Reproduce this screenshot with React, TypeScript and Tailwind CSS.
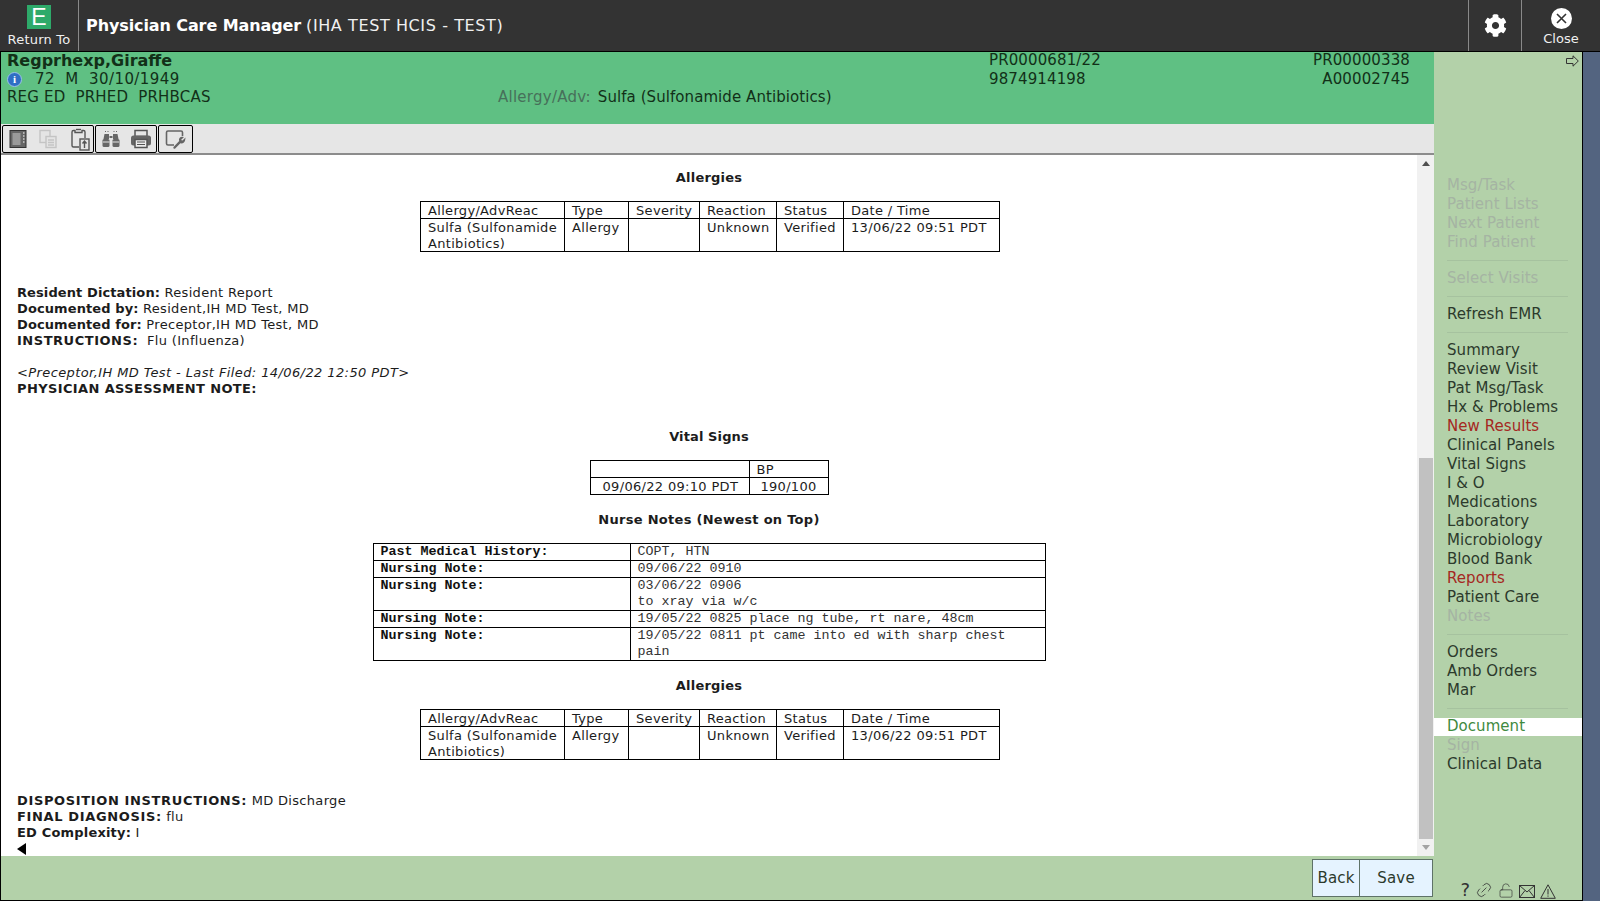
import React from "react";
import { FaCog } from "react-icons/fa";
import { Link2, LockOpen } from "lucide-react";

function Cell({ children, className = "" }: { children?: React.ReactNode; className?: string }) {
  return (
    <td className={`border border-black px-[7px] align-top leading-[16px] ${className}`}>
      <div className="translate-y-px">{children}</div>
    </td>
  );
}

const allergyRows = (
  <table className="mx-auto border-collapse border border-black w-[580px] table-fixed">
    <colgroup>
      <col className="w-[144px]" /><col className="w-[64px]" /><col className="w-[71px]" /><col className="w-[77px]" /><col className="w-[67px]" /><col />
    </colgroup>
    <tbody>
      <tr>
        {["Allergy/AdvReac", "Type", "Severity", "Reaction", "Status", "Date / Time"].map((h) => (
          <Cell key={h} className="h-[17px] whitespace-nowrap">{h}</Cell>
        ))}
      </tr>
      <tr>
        <Cell className="whitespace-nowrap">Sulfa (Sulfonamide<br />Antibiotics)</Cell>
        <Cell>Allergy</Cell>
        <Cell />
        <Cell>Unknown</Cell>
        <Cell>Verified</Cell>
        <Cell className="whitespace-nowrap">13/06/22 09:51 PDT</Cell>
      </tr>
    </tbody>
  </table>
);

function Heading({ children, className }: { children: React.ReactNode; className: string }) {
  return <div className={`text-center font-bold leading-[16px] translate-y-px ${className}`}>{children}</div>;
}

const nurse: [string, string[]][] = [
  ["Past Medical History:", ["COPT, HTN"]],
  ["Nursing Note:", ["09/06/22 0910"]],
  ["Nursing Note:", ["03/06/22 0906", "to xray via w/c"]],
  ["Nursing Note:", ["19/05/22 0825 place ng tube, rt nare, 48cm"]],
  ["Nursing Note:", ["19/05/22 0811 pt came into ed with sharp chest", "pain"]],
];

function MenuItem({ label, tone = "dark" }: { label: string; tone?: "dark" | "dim" | "red" }) {
  const c = tone === "dim" ? "text-[#a5b4a3]" : tone === "red" ? "text-[#a5281f]" : "text-[#2c3a2c]";
  return <div className={`h-[19px] leading-[19px] pl-[13px] ${c}`}>{label}</div>;
}

function Sep({ className }: { className: string }) {
  return <div className={`ml-[13px] w-[121px] h-px bg-[#a6c29f] ${className}`} />;
}

function Tool({ children }: { children: React.ReactNode }) {
  return <div className="w-[30px] h-[26px] flex items-center justify-center shrink-0">{children}</div>;
}

export default function App() {
  return (
    <div className="h-[901px] w-[1600px] flex flex-col bg-[#536480] overflow-hidden text-[13px] text-[#1c1c1c] font-['DejaVu_Sans',sans-serif] tracking-[0.32px]">
      {/* Header */}
      <header className="h-[52px] shrink-0 flex bg-[#333333] border-b border-black text-white">
        <div className="w-[79px] flex flex-col items-center border-r border-[#8a8a8a]">
          <div className="mt-[5px] w-[24px] h-[24px] bg-[#2eaa6a] flex items-center justify-center text-[23px] font-['Liberation_Sans',sans-serif] font-normal leading-none tracking-normal">E</div>
          <div className="mt-[3px] text-[13px] leading-[16px] text-[#f0f0f0] whitespace-nowrap tracking-[0.2px]">Return To</div>
        </div>
        <div className="flex-1 flex items-center pl-[7px] text-[16px]">
          <span className="font-bold tracking-[-0.1px]">Physician Care Manager</span>
          <span className="ml-[5px] text-[#f0f0f0] tracking-[0.6px]">(IHA TEST HCIS - TEST)</span>
        </div>
        <div className="w-[53px] flex items-center justify-center border-l border-[#8a8a8a]">
          <FaCog className="w-[23px] h-[23px] text-white" />
        </div>
        <div className="w-[79px] flex flex-col items-center border-l border-[#8a8a8a]">
          <div className="mt-[8px] w-[21px] h-[21px] rounded-full bg-white flex items-center justify-center">
            <svg viewBox="0 0 21 21" className="w-[21px] h-[21px]"><path d="M6 6l9 9M15 6l-9 9" stroke="#333" strokeWidth="1.6" fill="none" /></svg>
          </div>
          <div className="mt-[2px] text-[13px] leading-[16px] text-[#f0f0f0] tracking-normal">Close</div>
        </div>
      </header>

      <div className="flex-1 flex min-h-0">
        <div className="w-[1583px] flex border-r border-b border-black">
          {/* Left column */}
          <div className="w-[1434px] flex flex-col border-l border-black">
            {/* Banner */}
            <div className="h-[72px] bg-[#5fc083] grid grid-cols-[497px_491px_1fr] text-[15px] leading-[18px] text-[#123018] tracking-[0.12px]">
              <div className="pl-[6px]">
                <div className="font-bold text-[16px] leading-[17px] tracking-normal">Regprhexp,Giraffe</div>
                <div className="flex items-center h-[18px] mt-[1px] whitespace-pre tracking-[0.42px]">
                  <span className="w-[15px] h-[15px] rounded-full bg-[#2f6fc4] border border-[#9cc0ea] text-white text-[11px] leading-[13px] text-center font-bold font-['Liberation_Serif',serif] tracking-normal">i</span>
                  <span className="ml-[13px]">72  M  30/10/1949</span>
                </div>
                <div className="whitespace-pre tracking-[0.2px]">REG ED  PRHED  PRHBCAS</div>
              </div>
              <div className="pt-[36px] whitespace-nowrap">
                <span className="text-[#47705a] tracking-[0.25px]">Allergy/Adv:</span><span className="ml-[7px] tracking-[0.07px]">Sulfa (Sulfonamide Antibiotics)</span>
              </div>
              <div className="flex justify-between pr-[24px]">
                <div><div className="h-[17px] leading-[17px]">PR0000681/22</div><div className="mt-[1px]">9874914198</div></div>
                <div className="text-right"><div className="h-[17px] leading-[17px]">PR00000338</div><div className="mt-[1px]">A00002745</div></div>
              </div>
            </div>
            {/* Toolbar */}
            <div className="h-[31px] shrink-0 bg-[#e6e6e6] border-b-2 border-[#8c8c8c] flex items-start pl-[1px] pt-[1px] gap-[1px]">
              <div className="flex border border-black rounded-[2px] h-[28px] w-[92px] items-center">
                <Tool>
                  <svg viewBox="0 0 20 20" className="w-[20px] h-[20px]"><rect x="2" y="1.500" width="16" height="17" fill="#666" stroke="#333" /><rect x="4.500" y="4" width="8" height="12" fill="#9a9a9a" /><path d="M15 4h1.500M15 7h1.500M15 10h1.500M15 13h1.500" stroke="#fff" /></svg>
                </Tool>
                <Tool>
                  <svg viewBox="0 0 20 20" className="w-[20px] h-[20px]" fill="#e4e4e4" stroke="#c4c4c4" strokeWidth="1.4"><rect x="2" y="1.500" width="10" height="12" /><rect x="8" y="7.500" width="10" height="11" /><path d="M10 11h6M10 13.500h6M10 16h6" /></svg>
                </Tool>
                <Tool>
                  <svg viewBox="0 0 20 24" className="w-[20px] h-[24px] ml-[3px]" fill="none" stroke="#555" strokeWidth="1.4"><path d="M9 20H3.500Q2 20 2 18.500V5Q2 3.500 3.500 3.500H5V5.500H12V3.500H13.500Q15 3.500 15 5V11" /><path d="M6 2.500h5" /><rect x="10" y="12" width="9" height="11" fill="#e6e6e6" /><path d="M14.500 21v-6.500M12.500 16.500l2-2.500 2 2.500" /></svg>
                </Tool>
              </div>
              <div className="flex border border-black rounded-[2px] h-[28px] w-[62px] items-center">
                <Tool>
                  <svg viewBox="0 0 20 20" className="w-[20px] h-[20px]" fill="#666"><rect x="1.500" y="10" width="7" height="8" rx="1.500" /><rect x="11.500" y="10" width="7" height="8" rx="1.500" /><path d="M3.500 5h4.500v5H2.500zM12 5h4.500l1 5H12z" /><path d="M4 2.500h1M6.500 2.500h1M12.500 2.500h1M15 2.500h1" stroke="#666" /><rect x="8.500" y="7" width="3" height="2" /><path d="M2 13h6.500M11.500 13h6.500" stroke="#e6e6e6" /></svg>
                </Tool>
                <Tool>
                  <svg viewBox="0 0 22 20" className="w-[22px] h-[20px]"><rect x="5" y="1.500" width="12" height="6" fill="none" stroke="#555" strokeWidth="1.500" /><rect x="1" y="6.500" width="20" height="10" rx="2.500" fill="#666" /><rect x="5" y="10.500" width="12" height="8" fill="#eee" stroke="#555" strokeWidth="1.500" /><path d="M7 13h8M7 15.500h8" stroke="#555" /></svg>
                </Tool>
              </div>
              <div className="flex border border-black rounded-[2px] h-[28px] w-[35px] items-center justify-center">
                <svg viewBox="0 0 24 22" className="w-[24px] h-[22px]" fill="none" stroke="#666" strokeWidth="1.600"><path d="M10 17H4Q2.500 17 2.500 15.500V4.500Q2.500 3 4 3h13Q18.500 3 18.500 4.500V8" /><path d="M21.500 9.500l-3 3-1.500-.5 3-3q-3-1-4.500 1-1 1.500-.3 3L9.500 19q-.5 1 .2 1.500.8.500 1.500 0l5.200-5.200q2 .5 3.500-.8 1.500-1.700 1.600-4.500z" fill="#666" stroke="none" /></svg>
              </div>
            </div>
            {/* Content */}
            <div className="h-[701px] flex overflow-hidden bg-white">
              <div className="flex-1 min-w-0 leading-[16px]">
                <Heading className="pt-[14px] tracking-[0.2px]">Allergies</Heading>
                <div className="mt-[16px] pl-[2px]">{allergyRows}</div>
                <div className="mt-[32px] pl-[16px] translate-y-px">
                  <div><b className="tracking-[0.1px]">Resident Dictation:</b> Resident Report</div>
                  <div><b className="tracking-[0.1px]">Documented by:</b> Resident,IH MD Test, MD</div>
                  <div><b className="tracking-[0.1px]">Documented for:</b> Preceptor,IH MD Test, MD</div>
                  <div className="whitespace-pre"><b className="tracking-[0.53px]">INSTRUCTIONS:</b>  Flu (Influenza)</div>
                  <div className="mt-[16px] italic tracking-[0.4px]">&lt;Preceptor,IH MD Test - Last Filed: 14/06/22 12:50 PDT&gt;</div>
                  <div className="font-bold tracking-[0.38px]">PHYSICIAN ASSESSMENT NOTE:</div>
                </div>
                <Heading className="mt-[32px] tracking-[0.12px]">Vital Signs</Heading>
                <table className="mx-auto mt-[16px] border-collapse border border-black w-[239px] table-fixed">
                  <colgroup><col className="w-[159px]" /><col /></colgroup>
                  <tbody>
                    <tr><td className="border border-black h-[17px]"></td><Cell>BP</Cell></tr>
                    <tr><Cell className="px-[12px] whitespace-nowrap">09/06/22 09:10 PDT</Cell><Cell className="text-center">190/100</Cell></tr>
                  </tbody>
                </table>
                <Heading className="mt-[16px] tracking-[0.28px]">Nurse Notes (Newest on Top)</Heading>
                <table className="mx-auto mt-[16px] border-collapse border border-black w-[673px] table-fixed text-[13.33px] tracking-normal font-['Liberation_Mono',monospace] text-[#333]">
                  <colgroup><col className="w-[257px]" /><col /></colgroup>
                  <tbody>
                    {nurse.map(([k, v], i) => (
                      <tr key={i}>
                        <td className="border border-black px-[7px] align-top font-bold leading-[16px] text-[#111]">{k}</td>
                        <td className="border border-black px-[7px] align-top leading-[16px]">{v.map((l) => <div key={l}>{l}</div>)}</td>
                      </tr>
                    ))}
                  </tbody>
                </table>
                <Heading className="mt-[16px] tracking-[0.2px]">Allergies</Heading>
                <div className="mt-[16px] pl-[2px]">{allergyRows}</div>
                <div className="mt-[32px] pl-[16px]">
                  <div className="translate-y-px">
                    <div><b className="tracking-[0.64px]">DISPOSITION INSTRUCTIONS:</b> MD Discharge</div>
                    <div><b className="tracking-[0.64px]">FINAL DIAGNOSIS:</b> flu</div>
                    <div><b className="tracking-[0.18px]">ED Complexity:</b> I</div>
                  </div>
                  <svg viewBox="0 0 9 13" className="w-[9px] h-[12px] mt-[3px]" preserveAspectRatio="none"><path d="M9 0v13L0 6.500z" fill="#000" /></svg>
                </div>
              </div>
              {/* Scrollbar */}
              <div className="w-[17px] shrink-0 bg-[#f1f1f1] flex flex-col items-center">
                <div className="h-[17px] flex items-center justify-center shrink-0"><svg viewBox="0 0 8 5" className="w-[8px] h-[5px]"><path d="M4 0l4 5H0z" fill="#505050" /></svg></div>
                <div className="h-[286px] shrink-0" />
                <div className="w-[14px] flex-1 bg-[#c1c1c1]" />
                <div className="h-[17px] flex items-center justify-center shrink-0"><svg viewBox="0 0 8 5" className="w-[8px] h-[5px]"><path d="M0 0h8L4 5z" fill="#a3a3a3" /></svg></div>
              </div>
            </div>
            {/* Footer */}
            <div className="flex-1 bg-[#b3d1a9] flex justify-end items-start pt-[3px] pr-[1px] text-[#2c3a2c]">
              <div className="flex h-[38px] bg-[#e5f3ff] border border-[#5e7268] text-[15px] tracking-[0.2px]">
                <div className="w-[47px] flex items-center justify-center border-r border-[#5e7268]">Back</div>
                <div className="w-[72px] flex items-center justify-center">Save</div>
              </div>
            </div>
          </div>
          {/* Right menu */}
          <nav className="flex-1 bg-[#b3d1a9] relative text-[15px] tracking-[0.05px]">
            <svg viewBox="0 0 13 12" className="absolute right-[3px] top-[3px] w-[13px] h-[12px]"><path d="M.5 3.500h6.500V.8l5.300 5.200-5.300 5.200V8.500H.5z" fill="none" stroke="#333" /></svg>
            <div className="pt-[124px]">
              <MenuItem label="Msg/Task" tone="dim" />
              <MenuItem label="Patient Lists" tone="dim" />
              <MenuItem label="Next Patient" tone="dim" />
              <MenuItem label="Find Patient" tone="dim" />
              <Sep className="my-[8px]" />
              <MenuItem label="Select Visits" tone="dim" />
              <Sep className="my-[8px]" />
              <MenuItem label="Refresh EMR" />
              <Sep className="my-[8px]" />
              {["Summary", "Review Visit", "Pat Msg/Task", "Hx & Problems"].map((l) => <MenuItem key={l} label={l} />)}
              <MenuItem label="New Results" tone="red" />
              {["Clinical Panels", "Vital Signs", "I & O", "Medications", "Laboratory", "Microbiology", "Blood Bank"].map((l) => <MenuItem key={l} label={l} />)}
              <MenuItem label="Reports" tone="red" />
              <MenuItem label="Patient Care" />
              <MenuItem label="Notes" tone="dim" />
              <Sep className="my-[8px]" />
              <MenuItem label="Orders" />
              <MenuItem label="Amb Orders" />
              <MenuItem label="Mar" />
              <Sep className="mt-[8px] mb-[9px]" />
              <div className="h-[18px] leading-[16px] pl-[13px] bg-white text-[#3f8a3f]">Document</div>
              <MenuItem label="Sign" tone="dim" />
              <MenuItem label="Clinical Data" />
            </div>
            <div className="absolute right-[26px] bottom-[1px] flex items-end gap-[5px] text-[#333]">
              <span className="text-[18px] leading-[18px]">?</span>
              <Link2 className="w-[18px] h-[18px] -rotate-45" strokeWidth={1} />
              <LockOpen className="w-[16px] h-[17px]" strokeWidth={1} />
              <svg viewBox="0 0 16 13" className="w-[16px] h-[13px] mb-[1px]" fill="none" stroke="#333" strokeWidth="1"><rect x=".5" y=".5" width="15" height="12" /><path d="M.5.500L8 7l7.500-6.500M.5 12.500L6 5.500M15.500 12.500L10 5.500" /></svg>
              <svg viewBox="0 0 16 15" className="w-[16px] h-[15px]" fill="none" stroke="#333" strokeWidth="1"><path d="M8 .8L15.300 14.300H.7zM8 5v5.500M8 11.500v1.200" /></svg>
            </div>
          </nav>
        </div>
      </div>
    </div>
  );
}
